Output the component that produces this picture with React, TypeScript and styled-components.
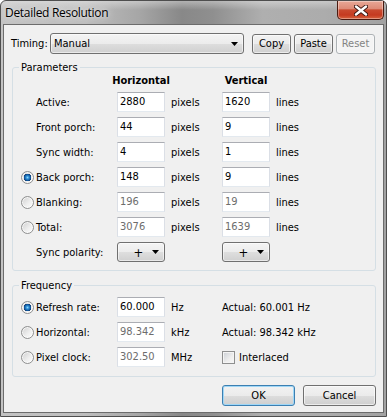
import React from "react";
import styled, { createGlobalStyle } from "styled-components";

const UI_FONT = `"DejaVu Sans Condensed", "DejaVu Sans", Tahoma, sans-serif`;

const GlobalStyle = createGlobalStyle`
  html, body { margin: 0; padding: 0; background: #ffffff; }
  body { width: 387px; height: 417px; overflow: hidden; }
  * { box-sizing: border-box; }
`;

const Window = styled.div`
  width: 387px;
  height: 417px;
  border: 1px solid #4e4e4e;
  border-radius: 6px 6px 0 0;
  padding: 0 2px 3px 2px;
  display: flex;
  flex-direction: column;
  background:
    linear-gradient(180deg, rgba(255, 255, 255, 0.35) 0px, rgba(255, 255, 255, 0) 9px),
    linear-gradient(90deg, #c3c3c3 0%, #bdbdbd 22%, #a6a6a6 36%, #888888 47%, #8f8f8f 55%, #afafaf 68%, #acacac 84%, #a2a2a2 100%);
  font-family: ${UI_FONT};
  font-stretch: condensed;
  font-size: 11px;
  color: #000;
`;

const TitleBar = styled.div`
  height: 23px;
  display: flex;
  align-items: flex-start;
  justify-content: space-between;
`;

const TitleText = styled.span`
  font-family: "Open Sans", "Noto Sans", sans-serif;
  font-stretch: normal;
  font-size: 12px;
  letter-spacing: -0.3px;
  line-height: 16px;
  padding: 4px 0 0 2px;
  color: #000;
  text-shadow: 0 0 8px rgba(255, 255, 255, 0.9), 0 0 3px rgba(255, 255, 255, 0.6);
`;

const CloseButton = styled.div`
  width: 47px;
  height: 19px;
  border: 1px solid #4a1a10;
  border-top: none;
  border-radius: 0 0 5px 5px;
  background: linear-gradient(180deg, #e8a897 0%, #de8b77 42%, #c94a2f 50%, #c53a20 78%, #d7643f 100%);
  box-shadow: inset 0 0 0 1px rgba(255, 255, 255, 0.35);
  display: flex;
  align-items: center;
  justify-content: center;
`;

const Client = styled.div`
  flex: 1;
  border: 1px solid #6c6c6c;
  background: #f0f0f0;
  padding: 8px 7px 6px 7px;
  display: flex;
  flex-direction: column;
`;

const TimingRow = styled.div`
  display: flex;
  align-items: center;
  height: 21px;
`;

const TimingLabel = styled.span`
  width: 39px;
`;

const Combo = styled.div<{ $width: number; $center?: boolean }>`
  width: ${(p) => p.$width}px;
  height: ${(p) => (p.$center ? 20 : 21)}px;
  border: 1px solid #707070;
  border-radius: 3px;
  background: linear-gradient(180deg, #f4f4f4 0%, #ececec 50%, #dedede 51%, #d0d0d0 100%);
  box-shadow: inset 0 0 0 1px rgba(255, 255, 255, 0.55);
  display: flex;
  align-items: center;
  padding: 0 5px 0 3px;
`;

const ComboText = styled.span<{ $center?: boolean }>`
  flex: 1;
  text-align: ${(p) => (p.$center ? "center" : "left")};
  font-size: ${(p) => (p.$center ? 13 : 11)}px;
  padding-left: ${(p) => (p.$center ? 4 : 0)}px;
`;

const PushButton = styled.button<{ $width: number; $height: number; $disabled?: boolean; $default?: boolean }>`
  width: ${(p) => p.$width}px;
  height: ${(p) => p.$height}px;
  margin: 0;
  padding: 0;
  font-family: ${UI_FONT};
  font-stretch: condensed;
  font-size: 11px;
  color: ${(p) => (p.$disabled ? "#838383" : "#000")};
  border: 1px solid ${(p) => (p.$disabled ? "#adb2b5" : p.$default ? "#3c7fb1" : "#707070")};
  border-radius: 3px;
  background: ${(p) =>
    p.$disabled
      ? "#f4f4f4"
      : "linear-gradient(180deg, #f2f2f2 0%, #ebebeb 50%, #dddddd 51%, #cfcfcf 100%)"};
  box-shadow: inset 0 0 0 1px
    ${(p) => (p.$disabled ? "rgba(255,255,255,0.4)" : p.$default ? "#9fd7f7" : "rgba(255,255,255,0.6)")};
`;

const TopButtons = styled.div`
  display: flex;
  gap: 3px;
  margin-left: 8px;
`;

const GroupBox = styled.fieldset<{ $top: number }>`
  margin: ${(p) => p.$top}px 0 0 1px;
  padding: 0;
  border: 1px solid #d5dfe5;
  border-radius: 3px;
  min-width: 0;
`;

const Legend = styled.legend`
  padding: 0 2px;
  margin-left: 6px;
  line-height: 13px;
  font-size: 11px;
`;

const FormGrid = styled.div<{ $rows: string; $pad: string }>`
  display: grid;
  grid-template-columns: 15px 81px 48px 57px 48px 1fr;
  grid-template-rows: ${(p) => p.$rows};
  row-gap: 5px;
  padding: ${(p) => p.$pad};
  align-items: center;
`;

const ColumnHead = styled.span`
  font-weight: bold;
  justify-self: center;
  white-space: nowrap;
  line-height: 13px;
`;

const Cell = styled.span<{ $span?: number }>`
  display: flex;
  align-items: center;
  white-space: nowrap;
  height: 20px;
  grid-column: ${(p) => (p.$span ? `span ${p.$span}` : "auto")};
`;

const Unit = styled(Cell)`
  padding-left: 6px;
`;

const TextBox = styled.div<{ $dim?: boolean }>`
  height: 20px;
  width: 48px;
  background: #ffffff;
  border: 1px solid #dbdfe6;
  border-top-color: #abadb3;
  border-bottom-color: #e3e9ef;
  padding: 0 2px;
  line-height: 18px;
  color: ${(p) => (p.$dim ? "#6d6d6d" : "#000")};
`;

const Radio = styled.span<{ $checked?: boolean }>`
  width: 13px;
  height: 13px;
  border-radius: 50%;
  border: 1px solid #8e8f8f;
  background: ${(p) =>
    p.$checked
      ? "radial-gradient(circle at 50% 50%, #8ad7f7 0px, #2a8ad4 1.6px, #0d4f93 3.2px, #1c3f6e 3.7px, rgba(255,255,255,0) 4px), linear-gradient(135deg, #d9d9d9 0%, #f6f6f6 100%)"
      : "linear-gradient(135deg, #cfcfcf 0%, #f0f0f0 60%, #fbfbfb 100%)"};
  box-shadow: inset 0 0 0 1px rgba(255, 255, 255, 0.7);
`;

const CheckBox = styled.span`
  width: 13px;
  height: 13px;
  border: 1px solid #8e8f8f;
  background: linear-gradient(135deg, #cbcfd5 0%, #eeeeee 60%, #f8f8f8 100%);
  box-shadow: inset 0 0 0 1px #f4f4f4;
  margin-right: 4px;
`;

const BottomButtons = styled.div`
  display: flex;
  justify-content: flex-end;
  gap: 8px;
  margin-top: 8px;
`;

const Arrow = () => (
  <svg width="7" height="4" viewBox="0 0 7 4">
    <path d="M0 0 H7 L3.5 4 Z" fill="#000" />
  </svg>
);

const CloseX = () => (
  <svg width="14" height="11" viewBox="0 0 14 11">
    <path d="M2 1.5 L12 9.5 M12 1.5 L2 9.5" stroke="#3a1510" strokeWidth="4.2" strokeLinecap="round" />
    <path d="M2 1.5 L12 9.5 M12 1.5 L2 9.5" stroke="#ffffff" strokeWidth="2.4" strokeLinecap="round" />
  </svg>
);

type ParamRow = { radio?: boolean; label: string; h: string; v: string; dim?: boolean };

const paramRows: ParamRow[] = [
  { label: "Active:", h: "2880", v: "1620" },
  { label: "Front porch:", h: "44", v: "9" },
  { label: "Sync width:", h: "4", v: "1" },
  { radio: true, label: "Back porch:", h: "148", v: "9" },
  { radio: false, label: "Blanking:", h: "196", v: "19", dim: true },
  { radio: false, label: "Total:", h: "3076", v: "1639", dim: true },
];

export default function App() {
  return (
    <>
      <GlobalStyle />
      <Window>
        <TitleBar>
          <TitleText>Detailed Resolution</TitleText>
          <CloseButton>
            <CloseX />
          </CloseButton>
        </TitleBar>
        <Client>
          <TimingRow>
            <TimingLabel>Timing:</TimingLabel>
            <Combo $width={194}>
              <ComboText>Manual</ComboText>
              <Arrow />
            </Combo>
            <TopButtons>
              <PushButton $width={39} $height={20}>Copy</PushButton>
              <PushButton $width={39} $height={20}>Paste</PushButton>
              <PushButton $width={39} $height={20} $disabled>Reset</PushButton>
            </TopButtons>
          </TimingRow>

          <GroupBox $top={7}>
            <Legend>Parameters</Legend>
            <FormGrid $rows="13px repeat(7, 20px)" $pad="0 0 8px 8px">
              <span />
              <span />
              <ColumnHead>Horizontal</ColumnHead>
              <span />
              <ColumnHead>Vertical</ColumnHead>
              <span />
              {paramRows.map((r) => (
                <React.Fragment key={r.label}>
                  <Cell>{r.radio !== undefined && <Radio $checked={r.radio} />}</Cell>
                  <Cell>{r.label}</Cell>
                  <TextBox $dim={r.dim}>{r.h}</TextBox>
                  <Unit>pixels</Unit>
                  <TextBox $dim={r.dim}>{r.v}</TextBox>
                  <Unit>lines</Unit>
                </React.Fragment>
              ))}
              <Cell />
              <Cell>Sync polarity:</Cell>
              <Combo $width={48} $center>
                <ComboText $center>+</ComboText>
                <Arrow />
              </Combo>
              <Cell />
              <Combo $width={48} $center>
                <ComboText $center>+</ComboText>
                <Arrow />
              </Combo>
              <Cell />
            </FormGrid>
          </GroupBox>

          <GroupBox $top={8}>
            <Legend>Frequency</Legend>
            <FormGrid $rows="repeat(3, 20px)" $pad="5px 0 9px 8px">
              <Cell><Radio $checked /></Cell>
              <Cell>Refresh rate:</Cell>
              <TextBox>60.000</TextBox>
              <Unit>Hz</Unit>
              <Cell $span={2}>Actual: 60.001 Hz</Cell>

              <Cell><Radio /></Cell>
              <Cell>Horizontal:</Cell>
              <TextBox $dim>98.342</TextBox>
              <Unit>kHz</Unit>
              <Cell $span={2}>Actual: 98.342 kHz</Cell>

              <Cell><Radio /></Cell>
              <Cell>Pixel clock:</Cell>
              <TextBox $dim>302.50</TextBox>
              <Unit>MHz</Unit>
              <Cell $span={2}>
                <CheckBox />
                Interlaced
              </Cell>
            </FormGrid>
          </GroupBox>

          <BottomButtons>
            <PushButton $width={73} $height={21} $default>OK</PushButton>
            <PushButton $width={73} $height={21}>Cancel</PushButton>
          </BottomButtons>
        </Client>
      </Window>
    </>
  );
}
